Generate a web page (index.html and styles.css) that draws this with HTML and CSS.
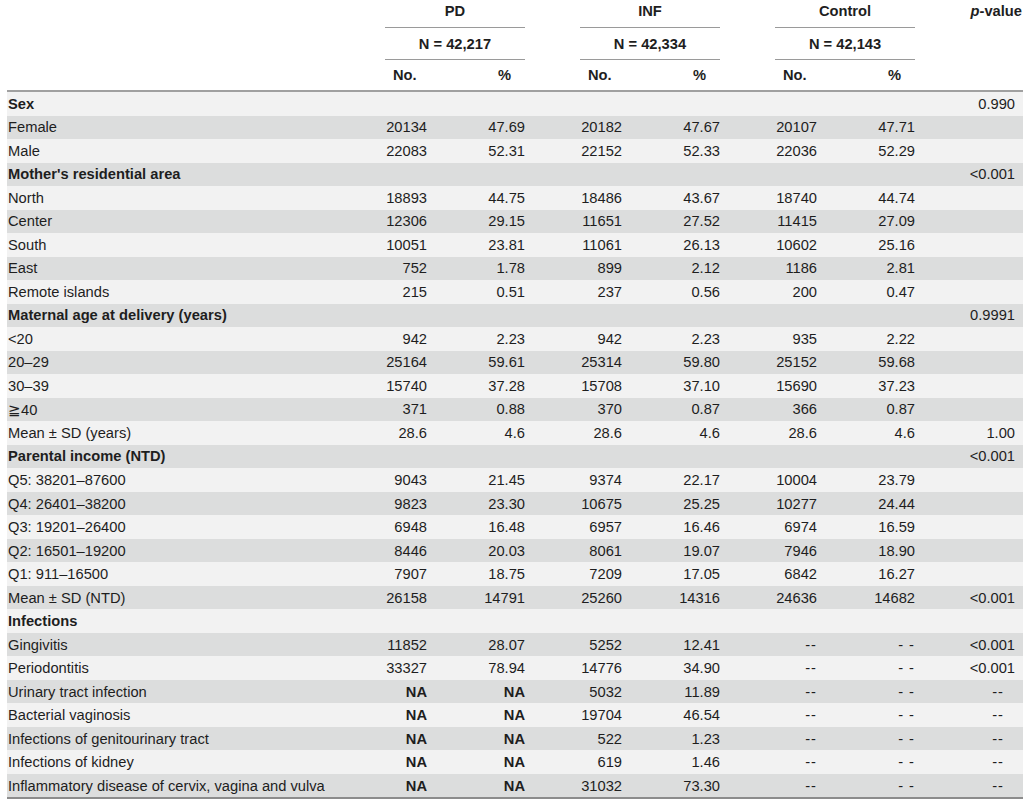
FILE: index.html
```html
<!DOCTYPE html>
<html lang="en">
<head>
    <meta charset="UTF-8">
    <title>Characteristics of study groups</title>
    <link rel="stylesheet" href="styles.css">
</head>
<body>
    <table class="stats">
        <colgroup>
            <col class="c-label">
            <col class="c-no"><col class="c-pct"><col class="c-gap">
            <col class="c-no"><col class="c-pct"><col class="c-gap">
            <col class="c-no"><col class="c-pct">
            <col class="c-p">
        </colgroup>
        <thead>
            <tr class="h1">
                <th rowspan="3" class="last"></th>
                <th colspan="2" class="grp">PD</th><th></th>
                <th colspan="2" class="grp">INF</th><th></th>
                <th colspan="2" class="grp">Control</th>
                <th rowspan="3" class="pval last"><i>p</i>-value</th>
            </tr>
            <tr class="h2">
                <th colspan="2" class="grp">N = 42,217</th><th></th>
                <th colspan="2" class="grp">N = 42,334</th><th></th>
                <th colspan="2" class="grp">N = 42,143</th>
            </tr>
            <tr class="h3">
                <th class="no last">No.</th><th class="pct last">%</th><th class="last"></th>
                <th class="no last">No.</th><th class="pct last">%</th><th class="last"></th>
                <th class="no last">No.</th><th class="pct last">%</th>
            </tr>
        </thead>
        <tbody>
            <tr class="sec"><td>Sex</td><td></td><td></td><td></td><td></td><td></td><td></td><td></td><td></td><td>0.990</td></tr>
            <tr><td>Female</td><td>20134</td><td>47.69</td><td></td><td>20182</td><td>47.67</td><td></td><td>20107</td><td>47.71</td><td></td></tr>
            <tr><td>Male</td><td>22083</td><td>52.31</td><td></td><td>22152</td><td>52.33</td><td></td><td>22036</td><td>52.29</td><td></td></tr>
            <tr class="sec"><td>Mother's residential area</td><td></td><td></td><td></td><td></td><td></td><td></td><td></td><td></td><td>&lt;0.001</td></tr>
            <tr><td>North</td><td>18893</td><td>44.75</td><td></td><td>18486</td><td>43.67</td><td></td><td>18740</td><td>44.74</td><td></td></tr>
            <tr><td>Center</td><td>12306</td><td>29.15</td><td></td><td>11651</td><td>27.52</td><td></td><td>11415</td><td>27.09</td><td></td></tr>
            <tr><td>South</td><td>10051</td><td>23.81</td><td></td><td>11061</td><td>26.13</td><td></td><td>10602</td><td>25.16</td><td></td></tr>
            <tr><td>East</td><td>752</td><td>1.78</td><td></td><td>899</td><td>2.12</td><td></td><td>1186</td><td>2.81</td><td></td></tr>
            <tr><td>Remote islands</td><td>215</td><td>0.51</td><td></td><td>237</td><td>0.56</td><td></td><td>200</td><td>0.47</td><td></td></tr>
            <tr class="sec"><td>Maternal age at delivery (years)</td><td></td><td></td><td></td><td></td><td></td><td></td><td></td><td></td><td>0.9991</td></tr>
            <tr><td>&lt;20</td><td>942</td><td>2.23</td><td></td><td>942</td><td>2.23</td><td></td><td>935</td><td>2.22</td><td></td></tr>
            <tr><td>20–29</td><td>25164</td><td>59.61</td><td></td><td>25314</td><td>59.80</td><td></td><td>25152</td><td>59.68</td><td></td></tr>
            <tr><td>30–39</td><td>15740</td><td>37.28</td><td></td><td>15708</td><td>37.10</td><td></td><td>15690</td><td>37.23</td><td></td></tr>
            <tr><td>≧40</td><td>371</td><td>0.88</td><td></td><td>370</td><td>0.87</td><td></td><td>366</td><td>0.87</td><td></td></tr>
            <tr><td>Mean ± SD (years)</td><td>28.6</td><td>4.6</td><td></td><td>28.6</td><td>4.6</td><td></td><td>28.6</td><td>4.6</td><td>1.00</td></tr>
            <tr class="sec"><td>Parental income (NTD)</td><td></td><td></td><td></td><td></td><td></td><td></td><td></td><td></td><td>&lt;0.001</td></tr>
            <tr><td>Q5: 38201–87600</td><td>9043</td><td>21.45</td><td></td><td>9374</td><td>22.17</td><td></td><td>10004</td><td>23.79</td><td></td></tr>
            <tr><td>Q4: 26401–38200</td><td>9823</td><td>23.30</td><td></td><td>10675</td><td>25.25</td><td></td><td>10277</td><td>24.44</td><td></td></tr>
            <tr><td>Q3: 19201–26400</td><td>6948</td><td>16.48</td><td></td><td>6957</td><td>16.46</td><td></td><td>6974</td><td>16.59</td><td></td></tr>
            <tr><td>Q2: 16501–19200</td><td>8446</td><td>20.03</td><td></td><td>8061</td><td>19.07</td><td></td><td>7946</td><td>18.90</td><td></td></tr>
            <tr><td>Q1: 911–16500</td><td>7907</td><td>18.75</td><td></td><td>7209</td><td>17.05</td><td></td><td>6842</td><td>16.27</td><td></td></tr>
            <tr><td>Mean ± SD (NTD)</td><td>26158</td><td>14791</td><td></td><td>25260</td><td>14316</td><td></td><td>24636</td><td>14682</td><td>&lt;0.001</td></tr>
            <tr class="sec"><td>Infections</td><td></td><td></td><td></td><td></td><td></td><td></td><td></td><td></td><td></td></tr>
            <tr><td>Gingivitis</td><td>11852</td><td>28.07</td><td></td><td>5252</td><td>12.41</td><td></td><td class="dash">--</td><td class="dash">- -</td><td>&lt;0.001</td></tr>
            <tr><td>Periodontitis</td><td>33327</td><td>78.94</td><td></td><td>14776</td><td>34.90</td><td></td><td class="dash">--</td><td class="dash">- -</td><td>&lt;0.001</td></tr>
            <tr><td>Urinary tract infection</td><td class="na">NA</td><td class="na">NA</td><td></td><td>5032</td><td>11.89</td><td></td><td class="dash">--</td><td class="dash">- -</td><td class="dash pdash">--</td></tr>
            <tr><td>Bacterial vaginosis</td><td class="na">NA</td><td class="na">NA</td><td></td><td>19704</td><td>46.54</td><td></td><td class="dash">--</td><td class="dash">- -</td><td class="dash pdash">--</td></tr>
            <tr><td>Infections of genitourinary tract</td><td class="na">NA</td><td class="na">NA</td><td></td><td>522</td><td>1.23</td><td></td><td class="dash">--</td><td class="dash">- -</td><td class="dash pdash">--</td></tr>
            <tr><td>Infections of kidney</td><td class="na">NA</td><td class="na">NA</td><td></td><td>619</td><td>1.46</td><td></td><td class="dash">--</td><td class="dash">- -</td><td class="dash pdash">--</td></tr>
            <tr><td>Inflammatory disease of cervix, vagina and vulva</td><td class="na">NA</td><td class="na">NA</td><td></td><td>31032</td><td>73.30</td><td></td><td class="dash">--</td><td class="dash">- -</td><td class="dash pdash">--</td></tr>
        </tbody>
    </table>
</body>
</html>
```

FILE: styles.css
```css
body {
    margin: 0;
    background-color: white;
    font-family: "Liberation Sans", Arial, sans-serif;
    font-size: 14.7px;
    color: #1e1e1e;
}

.stats {
    margin-left: 7px;
    width: 1016px;
    table-layout: fixed;
    border-collapse: separate;
    border-spacing: 0;
}

.c-label { width: 378px; }
.c-no { width: 42px; }
.c-pct { width: 98px; }
.c-gap { width: 55px; }
.c-p { width: 108px; }

.stats th,
.stats td {
    padding: 0;
    white-space: nowrap;
}

/* header */
.stats th {
    font-weight: bold;
    text-align: center;
}

.h1 th {
    height: 28px;
    vertical-align: top;
    padding-top: 3px;
    box-sizing: border-box;
}
.h2 th { height: 31px; }
.h3 th { height: 30px; }

.h1 .grp,
.h2 .grp {
    border-bottom: 1px solid #9a9a9a;
}

.stats th.pval {
    vertical-align: top;
    text-align: right;
    padding-top: 3px;
    padding-right: 1px;
}

.stats th.no {
    text-align: left;
    padding-left: 8px;
}

.stats th.pct {
    text-align: right;
    padding-right: 14px;
}

.stats th.last {
    border-bottom: 2px solid #a0a0a0;
}

/* body */
.stats tbody tr {
    height: 23.52px;
    background-color: #f2f2f2;
}

.stats tbody tr:nth-child(even) {
    background-color: #dcdddd;
}

.stats tbody tr:last-child {
    height: 25.5px;
}

.stats tbody tr:last-child td {
    border-bottom: 2px solid #8c8c8c;
}

.stats td {
    text-align: right;
}

.stats td:first-child {
    text-align: left;
    padding-left: 1px;
}

.stats td:last-child {
    padding-right: 8px;
}

.stats tr.sec td:first-child {
    font-weight: bold;
}

.stats td.na {
    font-weight: bold;
}

.stats td.dash {
    letter-spacing: 1px;
}

.stats td.pdash {
    padding-right: 19px;
}
```
